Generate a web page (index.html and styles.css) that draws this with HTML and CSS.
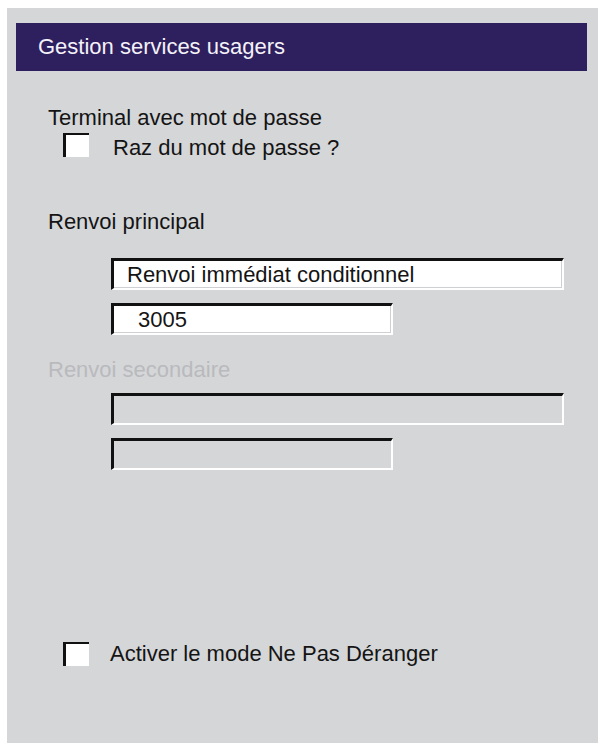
FILE: index.html
```html
<!DOCTYPE html>
<html lang="fr">
<head>
<meta charset="utf-8">
<title>Gestion services usagers</title>
<link rel="stylesheet" href="styles.css">
</head>
<body>
<div class="panel">
  <div class="header">Gestion services usagers</div>
  <div class="content">
    <div class="label first">Terminal avec mot de passe</div>
    <div class="check-row raz">
      <span class="checkbox"></span>
      <span class="check-text">Raz du mot de passe ?</span>
    </div>
    <div class="label principal">Renvoi principal</div>
    <div class="field wide f1"><span class="val">Renvoi immédiat conditionnel</span></div>
    <div class="field narrow f2"><span class="val num">3005</span></div>
    <div class="label disabled secondaire">Renvoi secondaire</div>
    <div class="field wide off f3"></div>
    <div class="field narrow off f4"></div>
    <div class="check-row npd">
      <span class="checkbox"></span>
      <span class="check-text">Activer le mode Ne Pas Déranger</span>
    </div>
  </div>
</div>
</body>
</html>
```

FILE: styles.css
```css
html, body {
  margin: 0;
  padding: 0;
  background: #ffffff;
}
body {
  font-family: "Liberation Sans", Arial, Helvetica, sans-serif;
  font-size: 22px;
  color: #141414;
}
.panel {
  margin: 8px 0 0 7px;
  width: 591px;
  height: 735px;
  background: #d5d6d8;
  padding-top: 15px;
  box-sizing: border-box;
  overflow: hidden;
}
.header {
  margin: 0 11px 0 9px;
  height: 48px;
  background: #2e1f5e;
  color: #f4f2f8;
  line-height: 48px;
  padding-left: 22px;
}
.content {
  padding-left: 41px;
}
.label {
  line-height: 25px;
  height: 25px;
}
.label.first { margin-top: 34px; }
.label.principal { margin-top: 49px; }
.label.disabled { color: #b9babd; }
.label.secondaire { margin-top: 22px; }
.check-row {
  display: flex;
  align-items: flex-start;
}
.check-row.raz { margin-top: 3px; }
.check-row.npd { margin-top: 172px; }
.checkbox {
  width: 26px;
  height: 24px;
  box-sizing: border-box;
  margin-left: 15px;
  background: #ffffff;
  border-top: 2px solid #111111;
  border-left: 3px solid #111111;
  flex: none;
}
.check-text {
  margin-left: 24px;
  line-height: 25px;
  margin-top: 1px;
}
.raz .check-text { margin-left: 24px; margin-top: 2px; }
.npd .check-text { margin-left: 21px; margin-top: -1px; }
.field {
  margin-left: 63px;
  height: 32px;
  box-sizing: border-box;
  background: #ffffff;
  border-top: 3px solid #111111;
  border-left: 3px solid #111111;
  border-right: 2px solid #ffffff;
  border-bottom: 2px solid #ffffff;
  box-shadow: inset -1px -1px 0 #cfd0d3;
  display: flex;
  align-items: center;
}
.field.wide { width: 453px; }
.field.narrow { width: 282px; }
.field.off {
  background: #d5d6d8;
  box-shadow: none;
}
.f1 { margin-top: 24px; }
.f2 { margin-top: 13px; }
.f3 { margin-top: 11px; }
.f4 { margin-top: 13px; }
.val {
  padding-left: 13px;
  line-height: 25px;
}
.val.num { padding-left: 24px; }
```
